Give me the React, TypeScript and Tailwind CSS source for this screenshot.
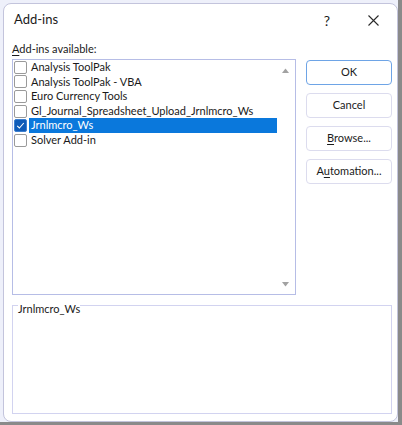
const addIns = [
  { name: 'Analysis ToolPak', checked: false },
  { name: 'Analysis ToolPak - VBA', checked: false },
  { name: 'Euro Currency Tools', checked: false },
  { name: 'Gl_Journal_Spreadsheet_Upload_Jrnlmcro_Ws', checked: false },
  { name: 'Jrnlmcro_Ws', checked: true },
  { name: 'Solver Add-in', checked: false },
];

const font = { fontFamily: 'Lato, "Liberation Sans", sans-serif' };

const Checkbox = ({ checked }: { checked: boolean }) =>
  checked ? (
    <span className="flex h-[13px] w-[13px] shrink-0 items-center justify-center rounded-[2px] border border-[#3d7fcf] bg-[#0f5bb8]">
      <svg width="9" height="9" viewBox="0 0 9 9" fill="none">
        <path d="M1.2 4.8 L3.4 7 L7.8 2" stroke="#fff" strokeWidth="1.1" />
      </svg>
    </span>
  ) : (
    <span className="h-[13px] w-[13px] shrink-0 rounded-[2px] border border-[#9a9a9a] bg-white" />
  );

const DialogButton = ({ children, primary }: { children: React.ReactNode; primary?: boolean }) => (
  <button
    className={
      primary
        ? 'flex h-[25px] w-[86px] items-center justify-center rounded-[4px] border border-[#6ea4e6] bg-white text-[11px] text-[#1b1b1b]'
        : 'flex h-[25px] w-[86px] items-center justify-center rounded-[4px] border border-[#dcdcee] bg-white text-[11px] text-[#1b1b1b]'
    }
  >
    {children}
  </button>
);

export default function App() {
  return (
    <div
      className="box-border h-[425px] w-[402px] border-b-[3px] border-r-[4px] border-[#8a8a8a] bg-[#eef0fa] pl-[3px] pt-[3px]"
      style={font}
    >
      <div className="box-border flex h-[419px] w-[395px] flex-col rounded-[8px] border border-[#c3c4dc] bg-white">
        {/* title bar */}
        <div className="flex h-[32px] items-center">
          <span className="ml-[10px] text-[13px] text-[#1a1a1a]">Add-ins</span>
          <span className="ml-auto text-[14px] text-[#1a1a1a]">?</span>
          <svg className="ml-[38px] mr-[18px]" width="11" height="11" viewBox="0 0 11 11">
            <path d="M0.5 0.5 L10.5 10.5 M10.5 0.5 L0.5 10.5" stroke="#2a2a2a" strokeWidth="1.1" />
          </svg>
        </div>

        <div className="ml-[8px] mt-[5px] flex">
          <div className="flex flex-col">
            <span className="h-[16px] text-[11px] leading-[16px] text-[#1a1a1a]">
              <span className="underline underline-offset-2">A</span>dd-ins available:
            </span>
            <div className="relative mt-[2px] h-[236px] w-[284px] border border-[#b6bde6] bg-white">
              <div className="flex flex-col">
                {addIns.map((item) => (
                  <div key={item.name} className="flex h-[14.6px] items-center pl-[1px]">
                    <Checkbox checked={item.checked} />
                    <span
                      className={
                        item.checked
                          ? 'ml-[2px] flex h-[15px] w-[248px] items-center pl-[2px] text-[11px] text-white bg-[#0a78dc]'
                          : 'ml-[2px] flex h-[15px] items-center pl-[2px] text-[11px] text-[#1a1a1a]'
                      }
                    >
                      {item.name}
                    </span>
                  </div>
                ))}
              </div>
              <svg className="absolute right-[6px] top-[8px]" width="7" height="5" viewBox="0 0 7 5">
                <path d="M0 5 L3.5 0.5 L7 5 Z" fill="#a2a2a2" />
              </svg>
              <svg className="absolute bottom-[7px] right-[6px]" width="7" height="5" viewBox="0 0 7 5">
                <path d="M0 0 L3.5 4.5 L7 0 Z" fill="#a2a2a2" />
              </svg>
            </div>
          </div>

          <div className="ml-[10px] flex flex-col gap-[8px] pt-[19px]">
            <DialogButton primary>OK</DialogButton>
            <DialogButton>Cancel</DialogButton>
            <DialogButton>
              <span>
                <span className="underline underline-offset-2">B</span>rowse...
              </span>
            </DialogButton>
            <DialogButton>
              <span>
                A<span className="underline underline-offset-2">u</span>tomation...
              </span>
            </DialogButton>
          </div>
        </div>

        <div className="relative ml-[8px] mt-[10px] h-[109px] w-[380px] border border-[#d2d3f0]">
          <span className="absolute left-[5px] top-[-4px] bg-white text-[11px] leading-[14px] text-[#1a1a1a]">
            Jrnlmcro_Ws
          </span>
        </div>
      </div>
    </div>
  );
}
